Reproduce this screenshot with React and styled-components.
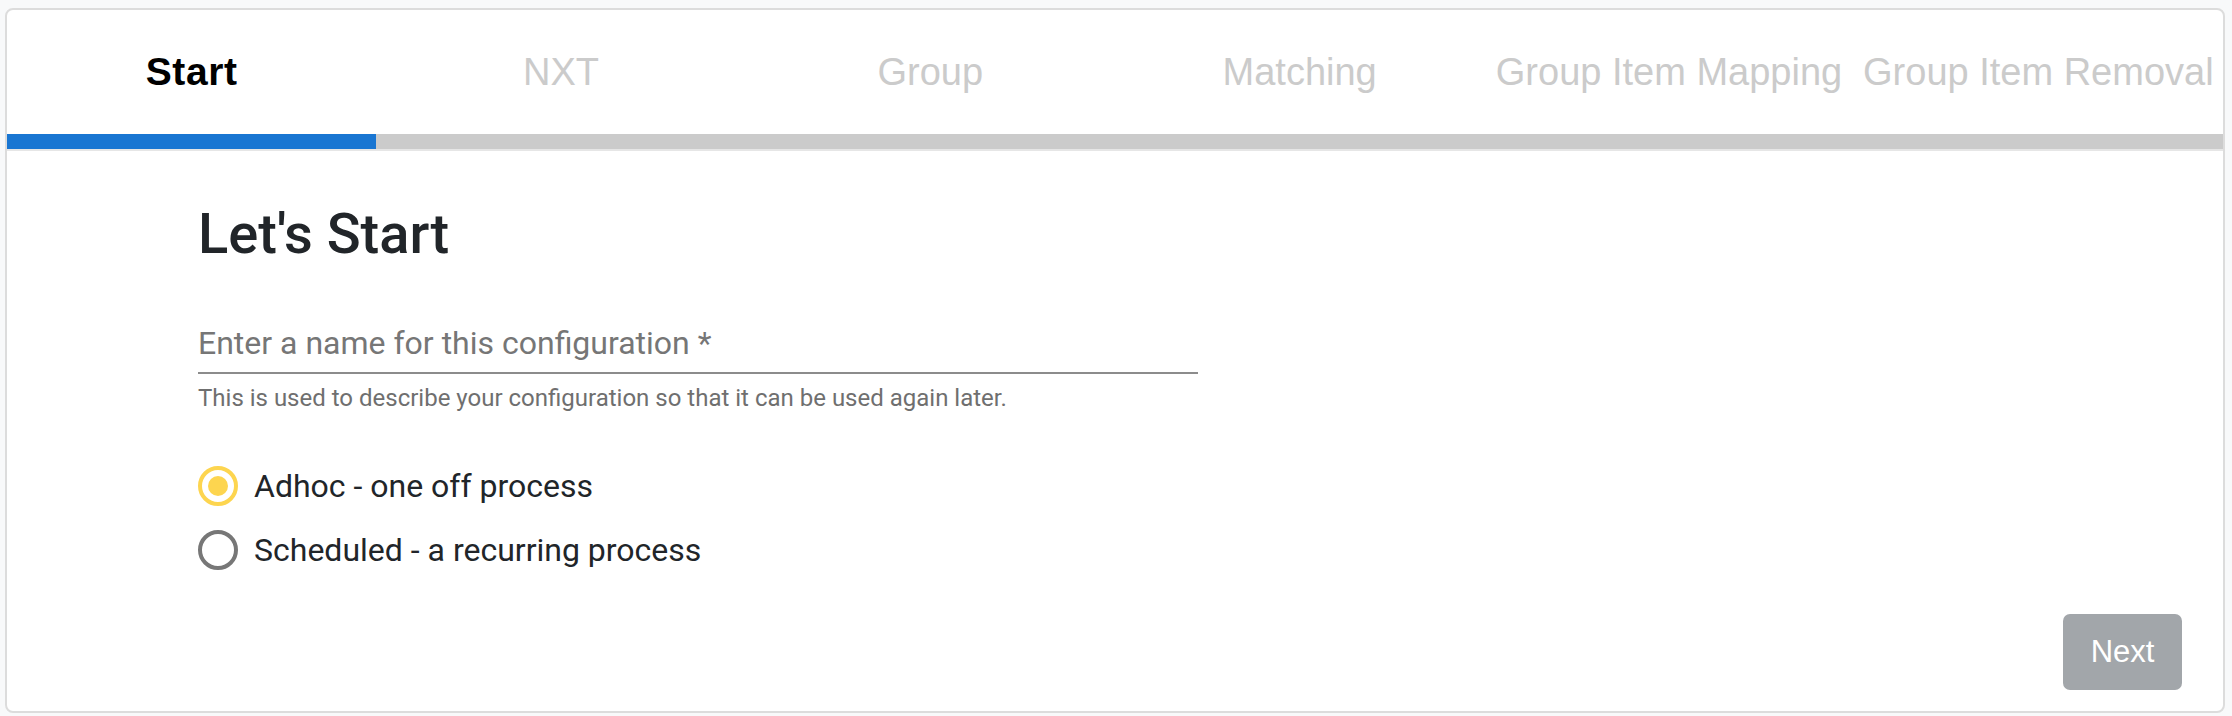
import React, { useState } from "react";
import styled, { createGlobalStyle } from "styled-components";

const steps = [
  "Start",
  "NXT",
  "Group",
  "Matching",
  "Group Item Mapping",
  "Group Item Removal",
];

const options = [
  { id: "adhoc", label: "Adhoc - one off process" },
  { id: "scheduled", label: "Scheduled - a recurring process" },
];

const GlobalStyle = createGlobalStyle`
  html, body {
    margin: 0;
    padding: 0;
    background: #f8f9fa;
  }
  * {
    box-sizing: border-box;
  }
`;

const Page = styled.div`
  padding: 8px 7px 0 5px;
`;

const Card = styled.section`
  background: #fff;
  border: 2px solid #dcdcdc;
  border-radius: 8px;
  overflow: hidden;
`;

const StepRow = styled.div`
  display: grid;
  grid-template-columns: repeat(6, 1fr);
  height: 124px;
  align-items: center;
`;

const Step = styled.div`
  text-align: center;
  white-space: nowrap;
  font-family: "Liberation Sans", Arial, sans-serif;
  font-size: ${(p) => (p.$active ? "39px" : "38px")};
  font-weight: ${(p) => (p.$active ? 700 : 400)};
  color: ${(p) => (p.$active ? "#000" : "#cbcbcb")};
  letter-spacing: ${(p) => (p.$active ? "0.6px" : "0")};
`;

const Track = styled.div`
  display: grid;
  grid-template-columns: repeat(6, 1fr);
  height: 15px;
  background: #cbcbcb;
  border-bottom: 2px solid #e6e6e6;
  box-sizing: content-box;
`;

const Fill = styled.div`
  background: #1976d2;
`;

const Body = styled.div`
  padding: 50px 0 0 191px;
  font-family: Roboto, "Noto Sans", sans-serif;
`;

const Title = styled.h1`
  margin: 0;
  font-size: 56px;
  font-weight: 500;
  line-height: 1.2;
  color: #212529;
`;

const NameInput = styled.input`
  display: block;
  width: 1000px;
  height: 40px;
  margin-top: 55px;
  padding: 0 0 9px;
  box-sizing: content-box;
  border: none;
  border-bottom: 2px solid #8c8c8c;
  outline: none;
  background: transparent;
  font-family: Roboto, "Noto Sans", sans-serif;
  font-size: 32px;
  color: #212529;

  &::placeholder {
    color: #767676;
  }
`;

const Helper = styled.p`
  margin: 10px 0 0;
  font-size: 24px;
  line-height: 1.2;
  color: #6f6f6f;
`;

const Options = styled.div`
  display: flex;
  flex-direction: column;
  margin-top: 41px;
`;

const Option = styled.label`
  display: flex;
  align-items: center;
  gap: 16px;
  height: 64px;
  cursor: pointer;
  font-size: 32px;
  line-height: 1.2;
  color: #212529;
`;

const Ring = styled.span`
  display: flex;
  align-items: center;
  justify-content: center;
  width: 40px;
  height: 40px;
  border-radius: 50%;
  border: 4px solid ${(p) => (p.$checked ? "#fdd54f" : "#777")};

  &::after {
    content: "";
    width: 20px;
    height: 20px;
    border-radius: 50%;
    background: ${(p) => (p.$checked ? "#fdd54f" : "transparent")};
  }
`;

const HiddenRadio = styled.input`
  display: none;
`;

const Footer = styled.div`
  display: flex;
  justify-content: flex-end;
  padding: 32px 41px 21px 0;
`;

const NextButton = styled.button`
  width: 119px;
  height: 76px;
  border: none;
  border-radius: 7px;
  background: #a2a6aa;
  color: #fff;
  font-family: "Liberation Sans", Arial, sans-serif;
  font-size: 31px;
  cursor: default;
`;

export default function App() {
  const [mode, setMode] = useState("adhoc");
  const current = 0;

  return (
    <>
      <GlobalStyle />
      <Page>
        <Card>
          <StepRow>
            {steps.map((s, i) => (
              <Step key={s} $active={i === current}>
                {s}
              </Step>
            ))}
          </StepRow>
          <Track>
            <Fill />
          </Track>

          <Body>
            <Title>Let's Start</Title>
            <NameInput placeholder="Enter a name for this configuration *" />
            <Helper>
              This is used to describe your configuration so that it can be
              used again later.
            </Helper>

            <Options>
              {options.map((o) => (
                <Option key={o.id}>
                  <HiddenRadio
                    type="radio"
                    name="mode"
                    checked={mode === o.id}
                    onChange={() => setMode(o.id)}
                  />
                  <Ring $checked={mode === o.id} />
                  {o.label}
                </Option>
              ))}
            </Options>
          </Body>

          <Footer>
            <NextButton disabled>Next</NextButton>
          </Footer>
        </Card>
      </Page>
    </>
  );
}
